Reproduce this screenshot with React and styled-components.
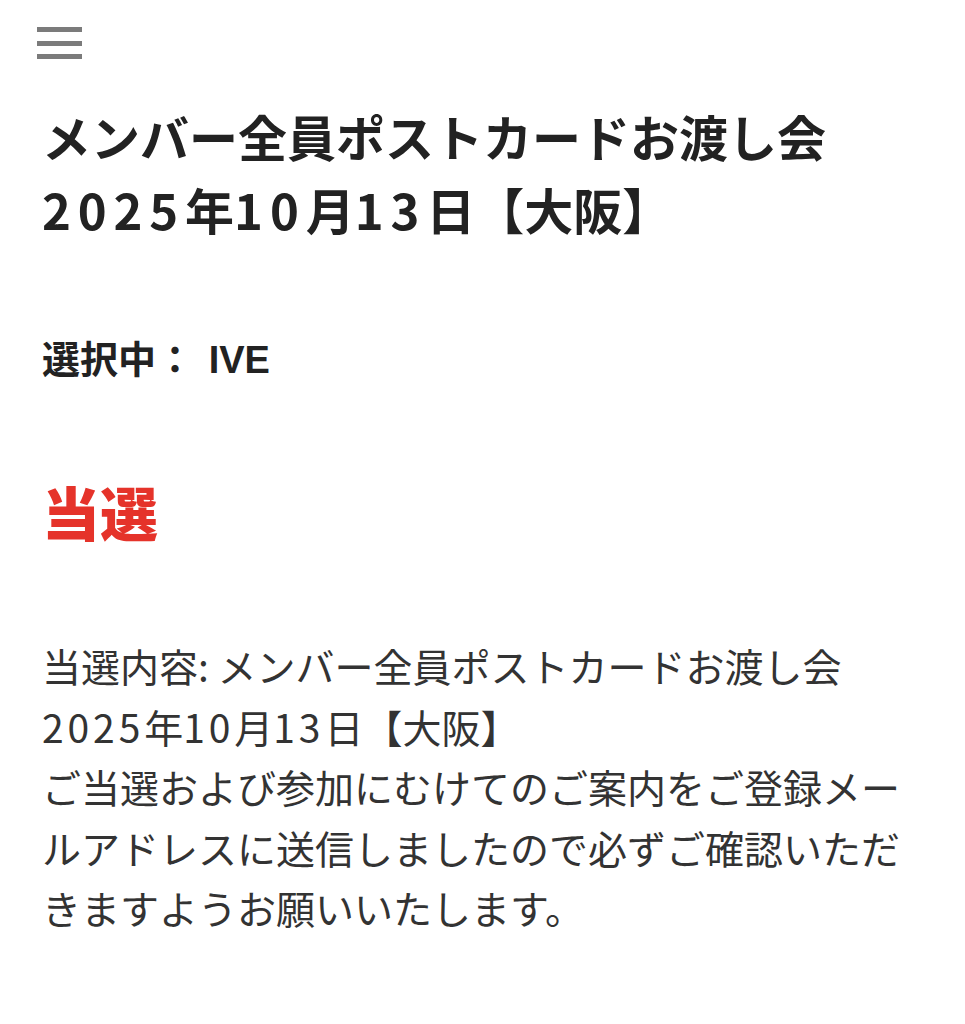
import React from 'react';
import styled, { createGlobalStyle } from 'styled-components';

const GlobalStyle = createGlobalStyle`
  html, body {
    margin: 0;
    padding: 0;
    background: #fff;
  }
  body {
    font-family: "Noto Sans CJK JP", "Noto Sans", sans-serif;
    color: #222;
  }
`;

const Page = styled.div`
  padding: 0 42px 60px;
`;

const Header = styled.header`
  height: 99px;
  display: flex;
  align-items: flex-start;
  padding-top: 27px;
  box-sizing: border-box;
`;

const MenuButton = styled.button`
  margin-left: -5px;
  padding: 0;
  border: 0;
  background: none;
  width: 45px;
  height: 32px;
  display: flex;
  flex-direction: column;
  justify-content: space-between;
  cursor: pointer;

  span {
    display: block;
    height: 5px;
    background: #7b7b7b;
  }
`;

const Title = styled.h1`
  margin: 0;
  font-size: 49px;
  line-height: 73px;
  font-weight: 700;
  color: #222;
`;

const Selected = styled.p`
  margin: 87px 0 0;
  font-size: 38px;
  line-height: 50px;
  font-weight: 700;
  color: #222;
`;

const Latin = styled.span`
  font-family: "Liberation Sans", "Noto Sans CJK JP", sans-serif;
  margin-left: 6px;
`;

const Result = styled.h2`
  margin: 91px 0 0;
  font-size: 58px;
  line-height: 70px;
  font-weight: 900;
  color: #e5332a;
`;

const Body = styled.p`
  margin: 89px 0 0;
  font-size: 39px;
  line-height: 60.5px;
  font-weight: 400;
  color: #333;
`;

// Hiragino digits run wider than Noto's, so digit runs get a little tracking
const Num = styled.span`
  letter-spacing: ${(p) => p.$track};
`;

function withDigits(text, track) {
  return text.split(/(\d+)/).map((part, i) =>
    /^\d+$/.test(part) ? (
      <Num key={i} $track={track}>
        {part}
      </Num>
    ) : (
      part
    )
  );
}

const EVENT = 'メンバー全員ポストカードお渡し会';
const DATE = '2025年10月13日【大阪】';

export default function App() {
  return (
    <>
      <GlobalStyle />
      <Page>
        <Header>
          <MenuButton aria-label="menu">
            <span />
            <span />
            <span />
          </MenuButton>
        </Header>
        <Title>
          {EVENT}
          <br />
          {withDigits(DATE, '0.14em')}
        </Title>
        <Selected>
          選択中：{' '}
          <Latin>IVE</Latin>
        </Selected>
        <Result>当選</Result>
        <Body>
          当選内容: {EVENT}
          <br />
          {withDigits(DATE, '0.1em')}
          <br />
          ご当選および参加にむけてのご案内をご登録メールアドレスに送信しましたので必ずご確認いただきますようお願いいたします。
        </Body>
      </Page>
    </>
  );
}
